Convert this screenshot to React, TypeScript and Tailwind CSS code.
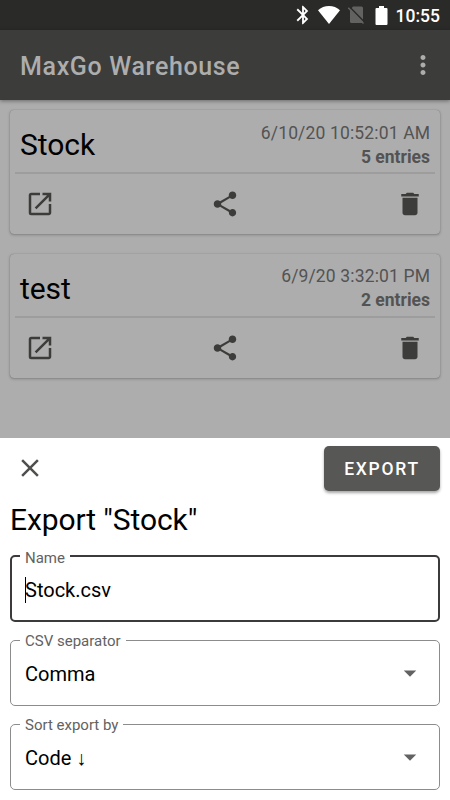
import { useState } from "react";
import {
  MdArrowDropDown,
  MdBluetooth,
  MdClose,
  MdDelete,
  MdMoreVert,
  MdOpenInNew,
  MdShare,
} from "react-icons/md";

interface StockList {
  name: string;
  date: string;
  entries: number;
}

const lists: StockList[] = [
  { name: "Stock", date: "6/10/20 10:52:01 AM", entries: 5 },
  { name: "test", date: "6/9/20 3:32:01 PM", entries: 2 },
];

function StatusBar() {
  return (
    <div className="flex h-[30px] shrink-0 items-center justify-end bg-[#2a2a28] pr-[10px] text-white">
      <MdBluetooth size={22} className="mr-[4px]" />
      <svg width="22" height="18" viewBox="0 0 22 18" className="mr-[8px]" fill="currentColor">
        <path d="M11 18 0 4.2C3 1.600 6.800 0 11 0s8 1.600 11 4.200z" />
      </svg>
      <svg width="16" height="18" viewBox="0 0 16 18" className="mr-[11px]">
        <path d="M5 .5h8.500A1.500 1.500 0 0 1 15 2v13.500a1.500 1.500 0 0 1-1.500 1.500h-10A1.500 1.500 0 0 1 2 15.500V4z" fill="#626260" />
        <path d="M1.200 .5 16 15.500" stroke="#2a2a28" strokeWidth="1.500" />
        <path d="M.3 1.800 15.500 17.500" stroke="#626260" strokeWidth="1.500" />
      </svg>
      <svg width="13" height="19" viewBox="0 0 13 19" className="mr-[8px]" fill="currentColor">
        <path d="M4 0h5v2h2.500A1 1 0 0 1 12.500 3v15a1 1 0 0 1-1 1h-10a1 1 0 0 1-1-1V3a1 1 0 0 1 1-1H4z" />
      </svg>
      <span className="pt-[3px] text-[17.5px] leading-none font-medium">10:55</span>
    </div>
  );
}

function ListCard({ list }: { list: StockList }) {
  return (
    <div className="flex h-[124px] flex-col rounded-[4px] px-[5px] shadow-[0_1px_3px_rgba(0,0,0,0.25),0_0_1px_rgba(0,0,0,0.3)]">
      <div className="flex h-[64px] items-center justify-between border-b-2 border-[#9d9d9d] px-[5px]">
        <h2 className="pt-[8.5px] text-[30px] leading-none tracking-[-0.05px] text-black">{list.name}</h2>
        <div className="pt-[7px] text-right text-[17.5px] leading-[24px] text-[#535353]">
          <p className="-mr-[0.15px] tracking-[0.15px]">{list.date}</p>
          <p className="font-bold">{list.entries} entries</p>
        </div>
      </div>
      <div className="flex flex-1 items-center justify-between px-[10px] text-[#3c3c3a]">
        <button type="button"><MdOpenInNew size={30} /></button>
        <button type="button"><MdShare size={30} /></button>
        <button type="button"><MdDelete size={30} /></button>
      </div>
    </div>
  );
}

function SelectField({ label, value }: { label: string; value: string }) {
  return (
    <fieldset className="h-[76px] rounded-[5px] border border-[#8c8c8c] px-[9px]">
      <legend className="px-[5px] text-[15px] leading-[20px] text-[#626262]">
        <span className="relative top-px">{label}</span>
      </legend>
      <div className="flex h-[46px] items-center justify-between pr-[5px] pl-[5px]">
        <span className="pt-px text-[20px] text-black">{value}</span>
        <MdArrowDropDown size={30} className="text-[#626262]" />
      </div>
    </fieldset>
  );
}

export default function App() {
  const [fileName, setFileName] = useState("Stock.csv");

  return (
    <div className="flex h-[800px] w-[450px] flex-col overflow-hidden bg-[#adadad] font-['Roboto',sans-serif]">
      <StatusBar />
      <header className="z-10 flex h-[70px] shrink-0 items-center justify-between bg-[#3c3c3a] pr-[12px] pl-[20px] text-[#adadad] shadow-[0_1px_4px_rgba(0,0,0,0.4)]">
        <h1 className="pt-[3px] text-[25px] leading-none font-medium tracking-[0.65px]">MaxGo Warehouse</h1>
        <MdMoreVert size={30} />
      </header>

      <main className="flex min-h-0 flex-1 flex-col gap-[19.5px] px-[10px] pt-[10px]">
        {lists.map((list) => (
          <ListCard key={list.name} list={list} />
        ))}
      </main>

      {/* Export sheet */}
      <section className="h-[362px] shrink-0 bg-white px-[10px] pt-[8px]">
        <div className="flex h-[45px] items-center justify-between pl-[5px]">
          <button type="button" className="pb-[2px] text-[#4f4f4d]"><MdClose size={30} /></button>
          <button
            type="button"
            className="h-[45px] w-[116px] rounded-[5px] bg-[#575755] pt-[2px] text-[17.5px] font-medium tracking-[1.75px] text-white shadow-[0_2px_3px_rgba(0,0,0,0.35)]"
          >
            EXPORT
          </button>
        </div>
        <h2 className="mt-[14px] text-[30px] leading-[30px] tracking-[-0.1px] text-black">Export "Stock"</h2>
        <form className="mt-[11px] flex flex-col gap-[8px]">
          <fieldset className="h-[76px] rounded-[5px] border-[2.5px] border-[#3c3a3a] px-[8px]">
            <legend className="px-[5px] text-[15px] leading-[20px] text-[#626262]">
              <span className="relative top-[2px]">Name</span>
            </legend>
            <div className="flex h-[47px] items-center pl-[5px]">
              <span className="-mr-px h-[26px] w-px bg-black" />
              <input
                value={fileName}
                onChange={(e) => setFileName(e.target.value)}
                className="w-full text-[20px] text-black outline-none"
              />
            </div>
          </fieldset>
          <SelectField label="CSV separator" value="Comma" />
          <SelectField label="Sort export by" value="Code ↓" />
        </form>
      </section>
    </div>
  );
}
